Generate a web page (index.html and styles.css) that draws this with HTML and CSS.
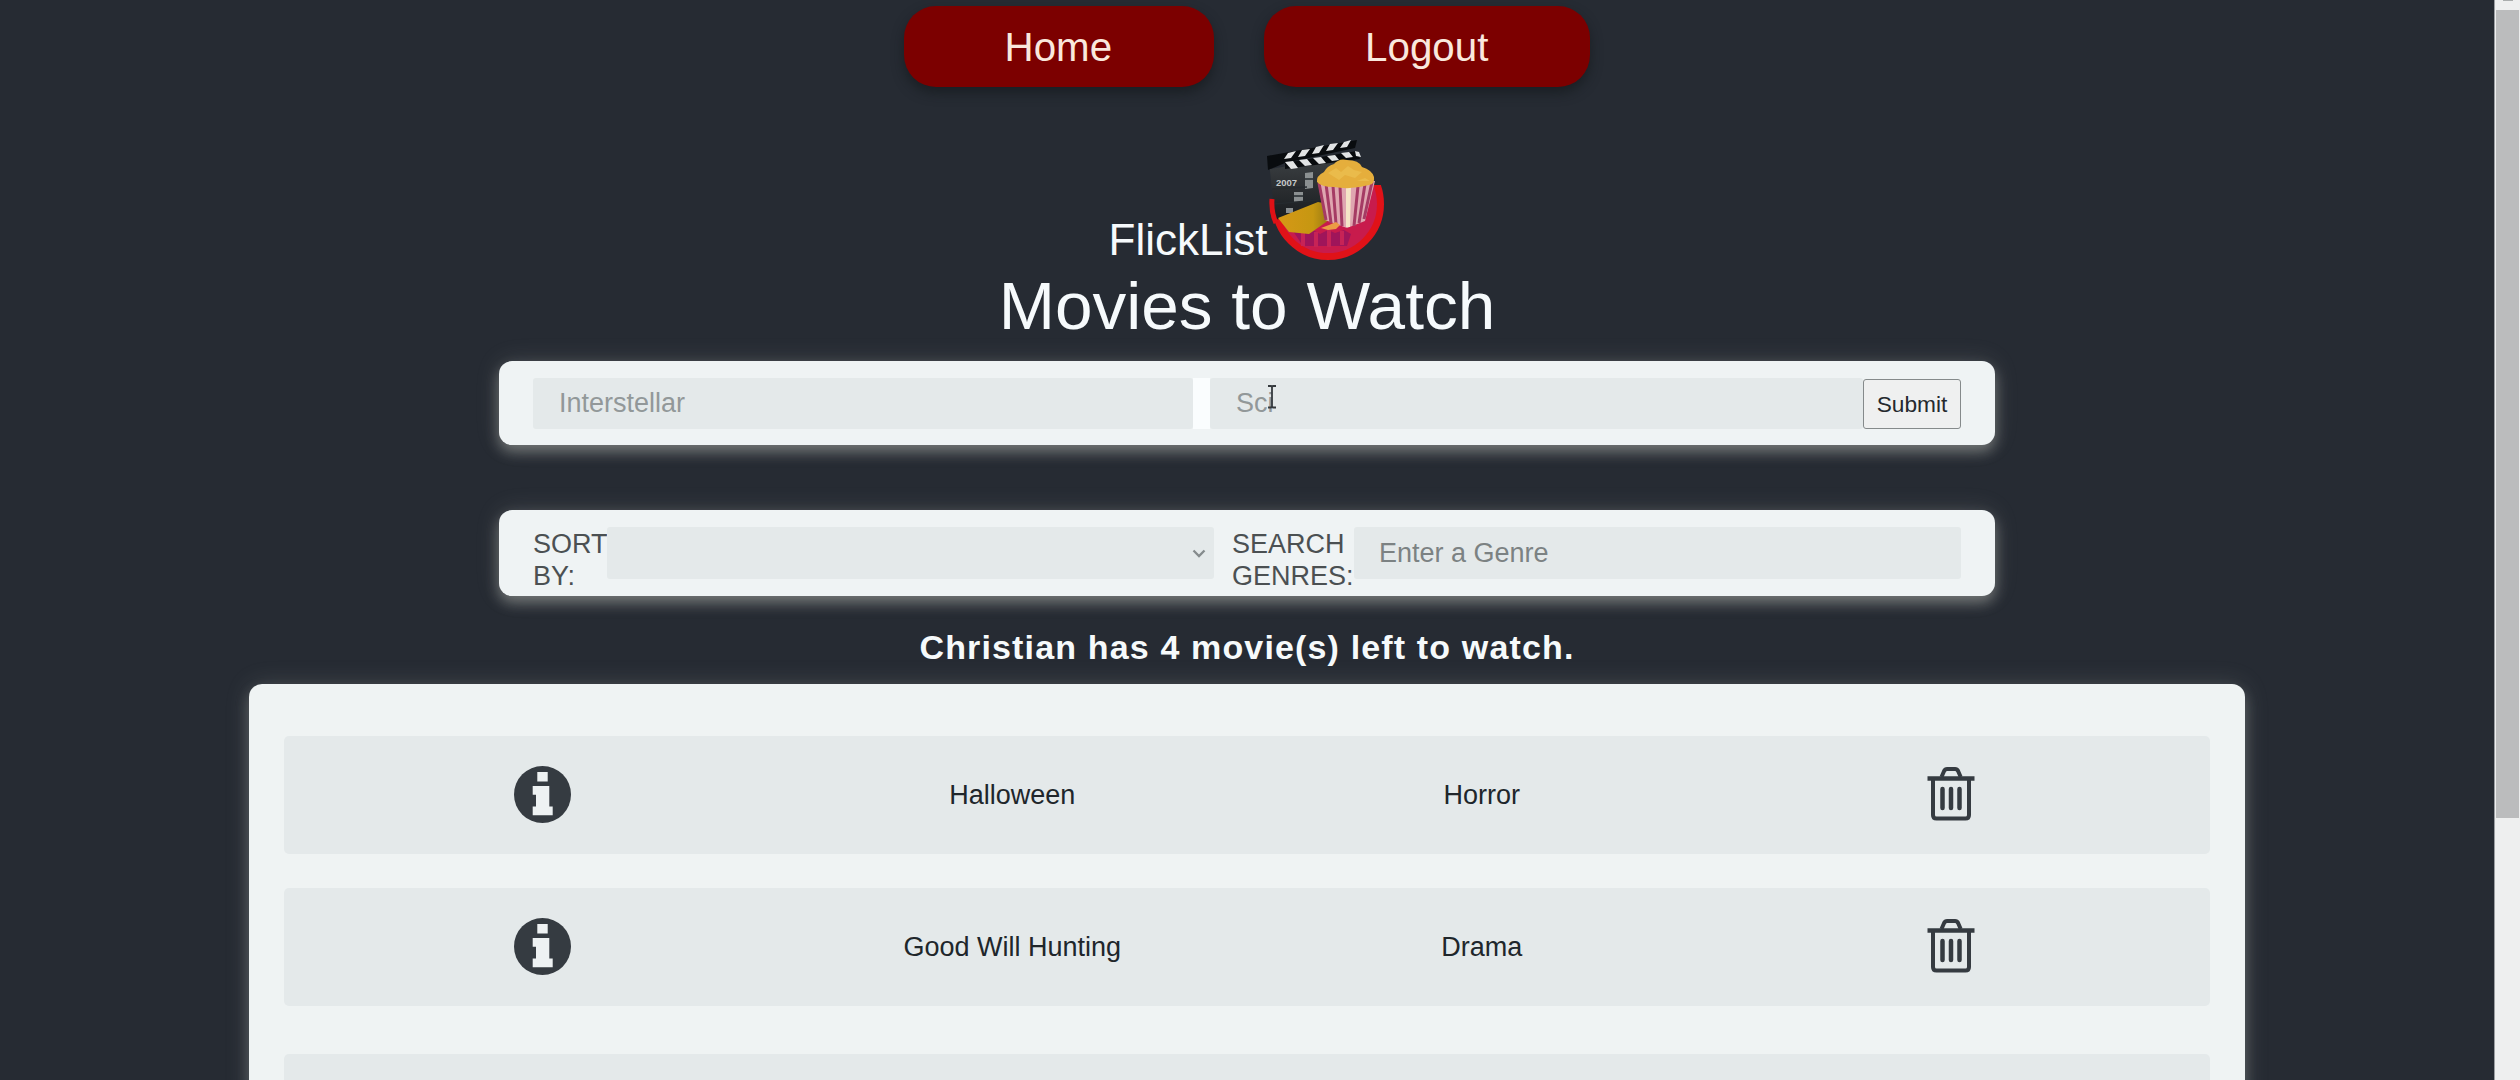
FILE: index.html
```html
<!DOCTYPE html>
<html lang="en">
<head>
<meta charset="utf-8">
<title>FlickList</title>
<link rel="stylesheet" href="styles.css">
</head>
<body>
<svg class="defs" aria-hidden="true">
  <symbol id="info" viewBox="0 0 57 57">
    <circle cx="28.5" cy="28.5" r="28.5" fill="#353b41"/>
    <path d="M23.3 6h10.400v9.500H23.300zM18.700 20h16.600v20.500h3.400v8.700h-20v-8.700H22V28.700h-3.300z" fill="#eef2f3"/>
  </symbol>
  <symbol id="trash" viewBox="0 0 48 54">
    <g fill="none" stroke="#353b41">
      <path d="M6 12v36q0 3.500 3.500 3.500h29q3.500 0 3.500-3.500V12" stroke-width="4"/>
      <path d="M.5 11.500h47" stroke-width="4.500"/>
      <path d="M14.500 10l2.600-6q1-2 3-2h8q2 0 3 2l2.600 6" stroke-width="4"/>
      <path d="M15.500 22v19M24 22v19M32.500 22v19" stroke-width="4.500" stroke-linecap="round"/>
    </g>
  </symbol>
</svg>
<div class="page">
  <nav class="nav">
    <a class="nav-link">Home</a>
    <a class="nav-link">Logout</a>
  </nav>
  <header class="brand">
    <span class="brand-name">FlickList</span>
    <svg class="logo" viewBox="0 0 120 124">
      <defs>
        <linearGradient id="board" x1="0" y1="0" x2="0" y2="1"><stop offset="0" stop-color="#3c4043"/><stop offset="1" stop-color="#191c1f"/></linearGradient>
        <linearGradient id="ticket" x1="0" y1="0" x2="1" y2="0"><stop offset="0" stop-color="#d69816"/><stop offset=".65" stop-color="#c69711"/><stop offset="1" stop-color="#8e7314"/></linearGradient>
        <clipPath id="disc"><circle cx="61" cy="65" r="51"/></clipPath>
        <clipPath id="lower"><path d="M0 60h60V48h44l4-2h12v78H0z"/></clipPath>
      </defs>
      <circle clip-path="url(#lower)" cx="61" cy="65" r="52.500" fill="#c81b4c" stroke="#e01218" stroke-width="7"/>
      <path clip-path="url(#disc)" d="M26 92l8-3 6 5 6-3 7 4 8-4 7 3 9-3 7 4-4 12H36z" fill="#9f155a"/>
      <path d="M36 88v19M49 93v15M62 91v17M75 92v14" stroke="#c72356" stroke-width="4"/>
      <path d="M3 30l75-12-8 48-62 15-5-49z" fill="url(#board)"/>
      <path d="M1 31L0 17l17-3 73-13-2 8-70 15z" fill="#090c0f"/>
      <path d="M18 24l72-12 3 8-75 10z" fill="#080b0e"/>
      <path d="M17 20l4-6 8-2-5 7zM31 18l4-7 8-1-5 7zM45 15l4-7 8-2-5 8zM59 12l4-7 8-1-5 7zM73 9l4-6 7-2-4 7zM18 23l8-1 5 7-7 1zM32 21l8-1 5 6-7 1zM46 19l8-1 5 6-7 1zM60 17l8-1 4 5-7 1zM74 14l8-1 4 5-7 1zM88 12l4 1 2 5-5-1z" fill="#e2e4e5"/>
      <text class="board-text" x="9" y="47">2007</text>
      <path d="M38 34l8-1v16l-8 1zM27 53h9v10h-9zM19 69h7v5h-7z" fill="#8b9091"/>
      <path d="M38 40h8M27 57h9M5 50l35-2M7 65l45-4" stroke="#252a2e" stroke-width="1.500"/>
      <path d="M5 60q-1 13 4 24" fill="none" stroke="#df1116" stroke-width="5"/>
      <path d="M11 79l40-16 10 2 4 14-23 16-20-2z" fill="url(#ticket)"/>
      <path d="M51 43l7 38 22 8 18-7 10-40z" fill="#dfa6b0"/>
      <path d="M52 44l7 37M59 45l5 39M66 47l3 38M73 48l2 39M91 47l-4 40M98 45l-6 39M105 43l-8 37" stroke="#a53b64" stroke-width="3"/>
      <path d="M79 48h5l-1 40h-4z" fill="#f5e5c7"/>
      <path d="M50 43q-1-6 7-10 3-6 10-8 5-6 13-4 12 0 15 7 10 3 12 10 1 7-5 8-18 5-35 2-13 0-17-5z" fill="#e5ae3c"/>
      <path d="M61 34l8-5 5 4 7-6 6 4 8 2-7 6-10-3-6 5zM90 42l8-3 5 3" fill="#eabb4b"/>
      <path d="M54 89l8-3 7-3 4 3-4 4-8 1z" fill="#eb9c45"/>
    </svg>
  </header>
  <h1 class="title">Movies to Watch</h1>
  <form class="bar add-bar">
    <input class="field movie" value="Interstellar">
    <span class="divider"></span>
    <input class="field" value="Sci">
    <button class="submit" type="button">Submit</button>
    <svg class="pointer" viewBox="0 0 10 24"><path d="M1 1h3l1 1 1-1h3M5 2v20M1 22.500h3l1-1 1 1h3" fill="none" stroke="#353a3e" stroke-width="1.800"/></svg>
  </form>
  <form class="bar filter-bar">
    <label class="label">SORT<br>BY:</label>
    <div class="field select"><svg class="chevron" viewBox="0 0 14 9"><path d="M1.500 1.500L7 7l5.500-5.500" fill="none" stroke="#858b8d" stroke-width="2.300"/></svg></div>
    <label class="label search-label">SEARCH<br>GENRES:</label>
    <input class="field genre" placeholder="Enter a Genre">
  </form>
  <h2 class="count">Christian has 4 movie(s) left to watch.</h2>
  <section class="list">
    <article class="row"><div><svg class="info"><use href="#info"/></svg></div><div>Halloween</div><div>Horror</div><div><svg class="trash"><use href="#trash"/></svg></div></article>
    <article class="row"><div><svg class="info"><use href="#info"/></svg></div><div>Good Will Hunting</div><div>Drama</div><div><svg class="trash"><use href="#trash"/></svg></div></article>
    <article class="row last"></article>
  </section>
</div>
<div class="scrollbar"><div class="arrow"></div><div class="thumb"></div></div>
</body>
</html>
```

FILE: styles.css
```css
* { box-sizing: border-box; }
html, body { height: 1080px; overflow: hidden; }
body {
  margin: 0;
  display: flex;
  background: #262b33;
  font-family: "Liberation Sans", Arial, sans-serif;
  font-size: 27px;
  color: #20262b;
}
.defs { position: absolute; width: 0; height: 0; }
.page {
  width: 2494px;
  height: 1080px;
  overflow: hidden;
  display: flex;
  flex-direction: column;
  align-items: center;
  flex: none;
}
.page > * { flex-shrink: 0; }
.nav { display: flex; gap: 50px; padding-top: 6px; }
.nav-link {
  height: 81px;
  padding: 0 102px 0 101px;
  border-radius: 32px;
  background: #7c0000;
  color: #fae8dd;
  font-size: 40.300px;
  line-height: 84px;
  box-shadow: 0 6px 12px rgba(20, 25, 27, .65);
}
.brand {
  height: 126px;
  margin-top: 52px;
  padding-left: 2px;
  display: flex;
  align-items: flex-start;
}
.brand-name {
  color: #f6fafc;
  font-size: 44px;
  line-height: 50px;
  padding-top: 76px;
}
.logo { width: 120px; height: 124px; }
.board-text { font-size: 9.500px; font-weight: bold; fill: #c6c9ca; }
.title {
  margin: 0;
  height: 96px;
  color: #f6fafc;
  font-size: 67.500px;
  font-weight: normal;
  line-height: 81px;
}
.bar {
  width: 1496px;
  display: flex;
  background: #eff3f4;
  border-radius: 13px;
  box-shadow: 0 7px 14px rgba(190, 192, 184, .45), 0 0 24px rgba(190, 192, 184, .16);
  position: relative;
}
.add-bar { height: 84px; padding: 17px 34px 16px; }
.filter-bar { height: 86px; margin-top: 65px; padding: 17px 34px; }
.field {
  flex: 1 1 0;
  min-width: 0;
  height: 51px;
  padding: 0 0 0 26px;
  border: 0;
  border-radius: 3px;
  background: #e4e9ea;
  color: #929899;
  font: 27px "Liberation Sans", Arial, sans-serif;
}
.movie { flex: none; width: 660px; }
.field::placeholder { color: #7c8283; opacity: 1; }
.divider { width: 17px; background: #fafdfe; }
.submit {
  width: 98px;
  height: 50px;
  margin-top: 1px;
  padding: 0;
  border: 1.500px solid #858a8b;
  border-radius: 3px;
  background: #eff0f0;
  color: #25292e;
  font: 22.700px "Liberation Sans", Arial, sans-serif;
}
.pointer { position: absolute; left: 768px; top: 24px; width: 10px; height: 24px; }
.label { width: 74px; line-height: 32px; padding-top: 1px; color: #4b5052; }
.select {
  flex: none;
  width: 607px;
  height: 52px;
  display: flex;
  align-items: center;
  justify-content: flex-end;
  padding-right: 8px;
}
.chevron { width: 14px; height: 9px; }
.search-label { width: 122px; margin-left: 18px; }
.genre { height: 52px; padding-left: 25px; }
.count {
  margin: 31px 0 0;
  height: 57px;
  color: #f6fafb;
  font-size: 34px;
  line-height: 40px;
  letter-spacing: 1.150px;
}
.list {
  width: 1996px;
  height: 420px;
  padding: 52px 35px 0;
  background: #eff3f3;
  border-radius: 13px;
  box-shadow: 0 7px 14px rgba(190, 192, 184, .3), 0 0 24px rgba(190, 192, 184, .18);
}
.row {
  height: 118px;
  margin-bottom: 34px;
  padding: 0 24px;
  display: grid;
  grid-template-columns: repeat(4, 1fr);
  align-items: center;
  text-align: center;
  background: #e4e9ea;
  border-radius: 5px;
}
.row div { display: flex; justify-content: center; }
.last { margin-top: 48px; }
.info { width: 57px; height: 57px; margin-bottom: 2px; }
.trash { width: 48px; height: 54px; margin-bottom: 2px; }
.scrollbar {
  flex: none;
  width: 26px;
  background: #eeefef;
  border-left: 1px solid #9b9ea2;
  padding: 0 1px;
}
.arrow { width: 10px; height: 1px; margin: 0 auto 9px; background: #aaadad; }
.thumb { height: 808px; background: #bbbcbd; }
```
